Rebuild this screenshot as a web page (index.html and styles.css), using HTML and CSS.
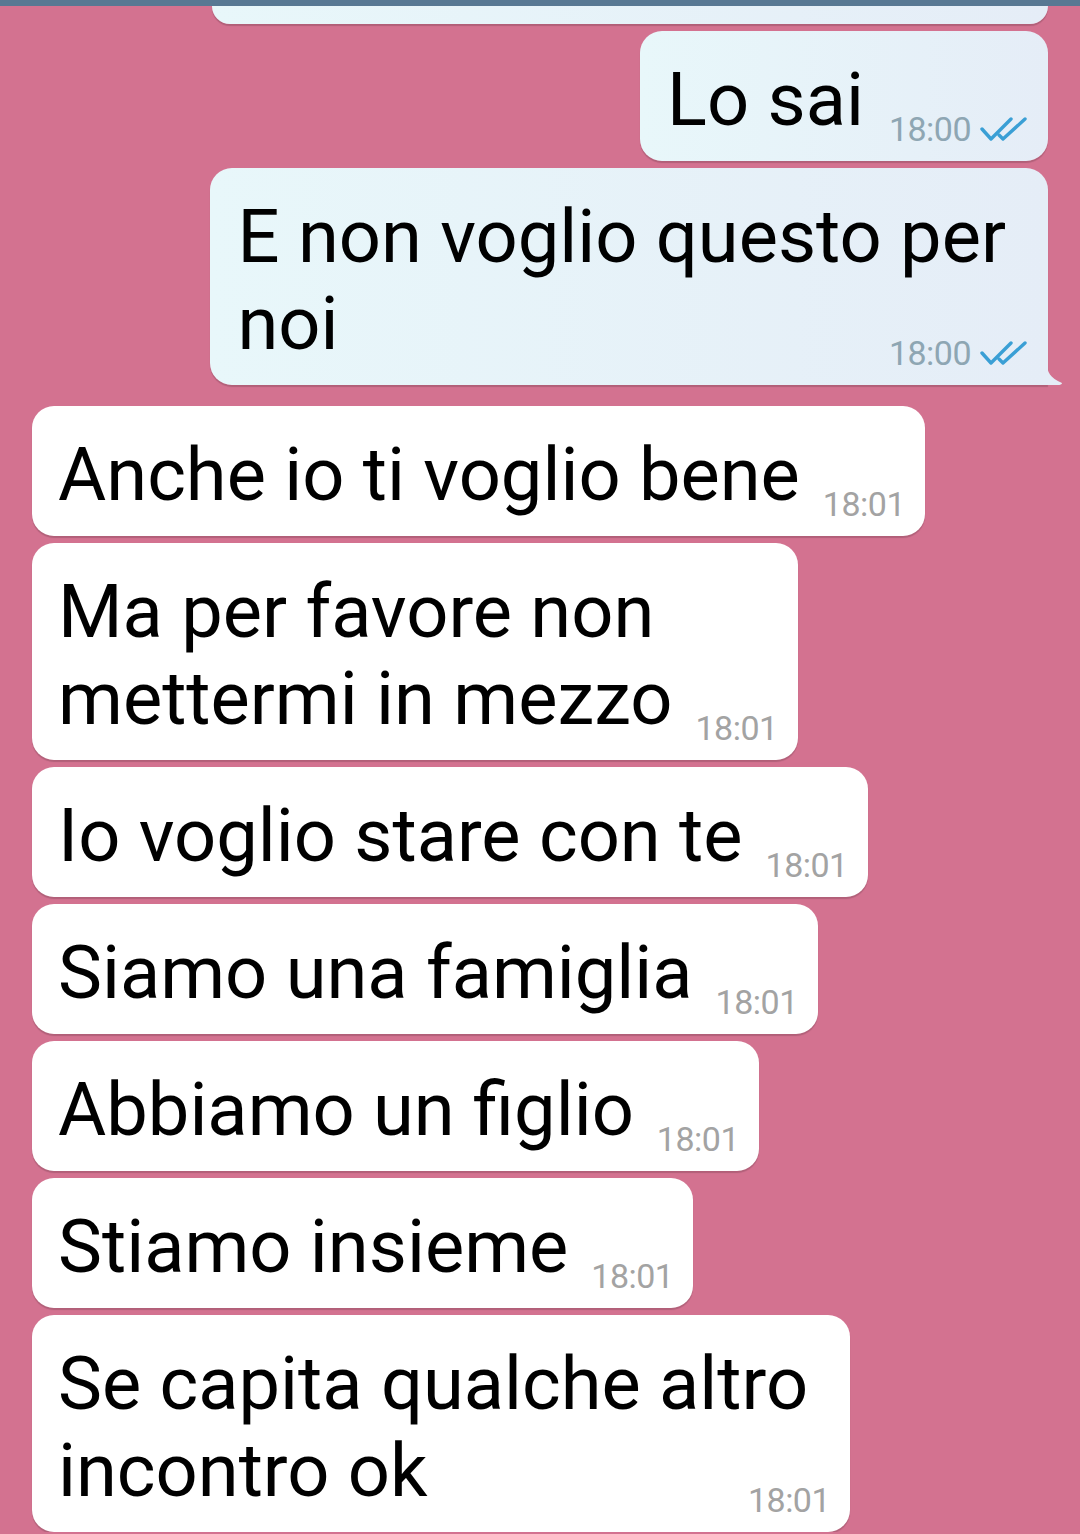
FILE: index.html
```html
<!DOCTYPE html>
<html lang="it">
<head>
    <meta charset="UTF-8">
    <title>Chat</title>
    <link rel="stylesheet" href="styles.css">
</head>
<body>
    <div class="topbar"></div>
    <div class="chat">
        <div class="bubble out cut"></div>

        <div class="bubble out">Lo sai<span class="meta">18:00 <svg class="ticks" viewBox="0 0 48 26" width="48" height="26"><path d="M2 13 L11 23 L31 3" /><path d="M19 19 L23 23 L45 3" /></svg></span></div>
        <div class="bubble out wide tail">E non voglio questo per<br>noi<span class="meta">18:00 <svg class="ticks" viewBox="0 0 48 26" width="48" height="26"><path d="M2 13 L11 23 L31 3" /><path d="M19 19 L23 23 L45 3" /></svg></span>
            <svg class="tail-shape" viewBox="0 0 16 22" width="16" height="22"><path d="M0 0 C0 9 3 15 15 20 C15 21.5 13 22 11 22 L0 22 Z" /></svg>
        </div>

        <div class="bubble in first">Anche io ti voglio bene<span class="meta">18:01</span></div>
        <div class="bubble in">Ma per favore non<br>mettermi in mezzo<span class="meta">18:01</span></div>
        <div class="bubble in">Io voglio stare con te<span class="meta">18:01</span></div>
        <div class="bubble in">Siamo una famiglia<span class="meta">18:01</span></div>
        <div class="bubble in">Abbiamo un figlio<span class="meta">18:01</span></div>
        <div class="bubble in">Stiamo insieme<span class="meta">18:01</span></div>
        <div class="bubble in wide">Se capita qualche altro<br>incontro ok<span class="meta">18:01</span></div>
    </div>
</body>
</html>
```
FILE: styles.css
```css
body {
    margin: 0;
    background-color: #d37290;
    font-family: Roboto, "Noto Sans", sans-serif;
    overflow: hidden;
}

.topbar {
    height: 6px;
    background-color: #587893;
}

.chat {
    display: flex;
    flex-direction: column;
    gap: 7px;
    padding: 0 32px;
}

.bubble {
    position: relative;
    font-size: 74px;
    line-height: 87px;
    color: #000;
    white-space: nowrap;
    padding: 25px 20px 18px 26px;
    border-radius: 22px;
    box-shadow: 0 2px 1px rgba(0, 0, 0, 0.16);
}

.bubble.in {
    align-self: flex-start;
    background-color: #fff;
}

.bubble.out {
    align-self: flex-end;
    background: linear-gradient(90deg, #e8f7fa, #e5edf7);
    padding-left: 27px;
    padding-right: 20px;
}

.bubble.cut {
    width: 836px;
    height: 18px;
    padding: 0;
    border-radius: 0 0 22px 22px;
    box-sizing: border-box;
}

.bubble.first {
    margin-top: 14px;
}

.bubble.wide {
    padding-right: 42px;
}

.bubble.wide .meta,
.bubble.out.wide .meta {
    margin-right: -22px;
}

.bubble.tail {
    border-bottom-right-radius: 0;
}

.tail-shape {
    position: absolute;
    right: -15px;
    bottom: 0;
    fill: #e5edf7;
}

.meta {
    float: right;
    margin: 63px 0 0 23px;
    font-size: 34px;
    line-height: 20px;
    letter-spacing: -0.5px;
    color: #a3a3a3;
}

.out .meta {
    color: #8ea6b3;
    margin-left: 25px;
}

.ticks {
    fill: none;
    stroke: #3a9fd5;
    stroke-width: 3.4;
    stroke-linecap: round;
    stroke-linejoin: round;
    vertical-align: 9px;
    margin: -10px 0 -10px 1px;
}
```
